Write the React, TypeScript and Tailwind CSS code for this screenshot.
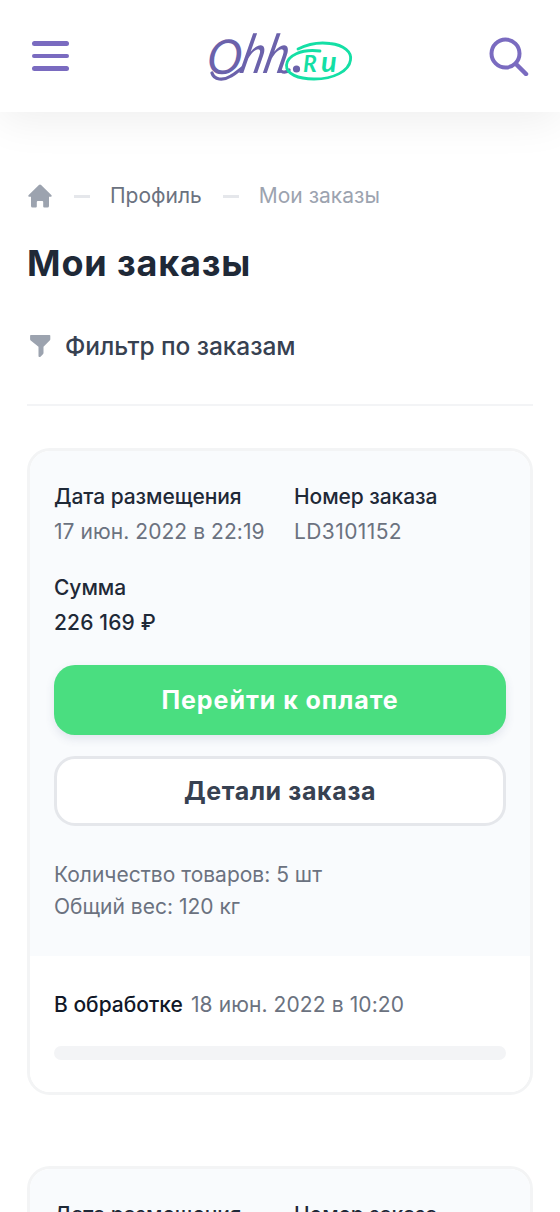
import { Fragment } from "react";

interface Order {
  id: string;
  date: string;
  total: string;
  count: number;
  weight: string;
  status: string;
  statusDate: string;
}

const orders: Order[] = [
  {
    id: "LD3101152",
    date: "17 июн. 2022 в 22:19",
    total: "226 169 ₽",
    count: 5,
    weight: "120 кг",
    status: "В обработке",
    statusDate: "18 июн. 2022 в 10:20",
  },
  {
    id: "LD3101151",
    date: "17 июн. 2022 в 21:40",
    total: "98 400 ₽",
    count: 2,
    weight: "64 кг",
    status: "В обработке",
    statusDate: "18 июн. 2022 в 10:05",
  },
];

const crumbs = [
  { title: "Профиль", className: "text-[#6b7280]" },
  { title: "Мои заказы", className: "text-[#9ca3af]" },
];

function Logo() {
  return (
    <svg width="150" height="60" viewBox="0 0 150 60" fill="none" className="overflow-visible" aria-label="Ohh.ru">
      <g fill="#6b62ab" fontFamily="Lato, sans-serif" fontStyle="italic">
        <text transform="translate(1 48) skewX(-5)" fontSize="48" textLength="35" lengthAdjust="spacingAndGlyphs">O</text>
        <text transform="translate(33 47) skewX(-14)" fontSize="54" textLength="47" lengthAdjust="spacingAndGlyphs">hh</text>
      </g>
      {/* swash under the first letter and the exit stroke before the dot */}
      <path
        d="M7 47C9 54 18 55 26 50C30 48 33 45 37 42M76 45C79 47 82 46 84 44"
        stroke="#6b62ab"
        strokeWidth="3.2"
        strokeLinecap="round"
      />
      <circle cx="91.5" cy="43" r="3.6" fill="#6b62ab" />
      <text
        x="98"
        y="45.5"
        fontSize="23"
        fill="#14dfa5"
        fontFamily="Lato, sans-serif"
        fontStyle="italic"
        fontWeight="700"
      >
        R
        <tspan x="116" fontSize="29">u</tspan>
      </text>
      <path
        d="M93 23C103 18 114 16 125 17.5C139 19 147 26 145.5 34C144 45 129 53 109 53C93 53 81 48 81.5 39C82 30 96 22.5 115 25"
        stroke="#14dfa5"
        strokeWidth="2.8"
        strokeLinecap="round"
      />
    </svg>
  );
}

function Header() {
  return (
    <header className="flex h-28 items-center justify-between bg-white px-[27px] shadow-[0_8px_44px_rgba(0,0,0,0.07)]">
      <button aria-label="Меню" className="flex w-[48px] flex-col gap-2 pl-[5px]">
        <span className="h-[4.5px] w-[37px] rounded-full bg-[#7a6bc0]" />
        <span className="h-[4.5px] w-[37px] rounded-full bg-[#7a6bc0]" />
        <span className="h-[4.5px] w-[37px] rounded-full bg-[#7a6bc0]" />
      </button>
      <Logo />
      <button aria-label="Поиск" className="flex w-[48px] justify-end pr-1">
        <svg width="40" height="40" viewBox="0 0 40 40" fill="none" stroke="#7a6bc0" strokeLinecap="round">
          <circle cx="16.5" cy="17.5" r="14" strokeWidth="4" />
          <path d="M27 28L37 38" strokeWidth="4.5" />
        </svg>
      </button>
    </header>
  );
}

function OrderCard({ order }: { order: Order }) {
  return (
    <article className="overflow-hidden rounded-[23px] border-3 border-[#f3f4f5]">
      <div className="h-[505px] bg-[#f9fbfd] px-6 pt-[28px] text-[21px]">
        <div className="grid grid-cols-[240px_1fr] gap-y-[21px] leading-[35px]">
          <div>
            <p className="font-medium tracking-[-0.07px] text-[#1f2937]">Дата размещения</p>
            <p className="tracking-[0.06px] text-[#6b7280]">{order.date}</p>
          </div>
          <div>
            <p className="font-medium tracking-[-0.07px] text-[#1f2937]">Номер заказа</p>
            <p className="tracking-[0.4px] text-[#6b7280]">{order.id}</p>
          </div>
          <div>
            <p className="font-medium tracking-[-0.07px] text-[#1f2937]">Сумма</p>
            <p className="font-medium tracking-[0.15px] text-[#1f2937]">{order.total}</p>
          </div>
        </div>
        <button className="mt-[25px] block h-[70px] w-full rounded-[21px] bg-[#4ade80] pt-0.5 text-[25px] font-bold tracking-[0.95px] text-white shadow-[0_4px_10px_rgba(60,70,120,0.12)]">
          Перейти к оплате
        </button>
        <button className="mt-[21px] block h-[70px] w-full rounded-[21px] border-3 border-[#e5e7eb] bg-white pt-0.5 text-[25px] font-bold tracking-[0.62px] text-[#374151]">
          Детали заказа
        </button>
        <div className="mt-[33px] leading-[31.5px] text-[#6b7280]">
          <p>Количество товаров: {order.count} шт</p>
          <p>Общий вес: {order.weight}</p>
        </div>
      </div>
      <div className="h-[136px] bg-white px-6 pt-[33px] text-[21px]">
        <p className="leading-8 tracking-[0.1px] text-[#6b7280]">
          <span className="mr-2 font-medium tracking-normal text-[#111827]">{order.status}</span>
          {order.statusDate}
        </p>
        <div className="mt-[25px] h-3.5 rounded-full bg-[#f3f4f6]" />
      </div>
    </article>
  );
}

export default function App() {
  return (
    <div className="h-[1212px] overflow-hidden bg-white font-[Inter,'Noto_Sans',sans-serif]">
      <Header />
      <main className="px-[27px] pt-[68px]">
        <nav className="flex h-8 items-center text-[21px]">
          <svg width="26" height="26" viewBox="0 0 26 26" fill="#9ca3af">
            <path d="M11.9 2.1a1.6 1.6 0 0 1 2.2 0L24.3 12c.8.8.3 1.8-.8 1.8H22V23a1.6 1.6 0 0 1-1.6 1.6h-3.2a1 1 0 0 1-1-1V19a1 1 0 0 0-1-1h-4.4a1 1 0 0 0-1 1v4.6a1 1 0 0 1-1 1H5.6A1.6 1.6 0 0 1 4 23v-9.2H2.5c-1.1 0-1.6-1-.8-1.8z" />
          </svg>
          {crumbs.map((crumb) => (
            <Fragment key={crumb.title}>
              <span className="mr-5 ml-[21px] h-[3px] w-4 bg-[#e5e7eb]" />
              <a className={crumb.className}>{crumb.title}</a>
            </Fragment>
          ))}
        </nav>
        <h1 className="mt-[28px] text-[36px] leading-[46px] font-bold tracking-[0.85px] text-[#1f2937]">Мои заказы</h1>
        <button className="mt-[42px] flex h-9 items-center text-[24.5px] font-medium tracking-[-0.08px] text-[#374151]">
          <svg className="mr-3" width="26" height="26" viewBox="0 0 26 26" fill="#9ca3af">
            <path d="M3.8 2h18.7a.8.8 0 0 1 .8.8v3.5a2 2 0 0 1-.6 1.3L16.5 13.8v6.2c0 .6-.3 1.200-.8 1.600l-2.500 2.300c-.7.500-1.700.1-1.700-.8v-9.300L3.700 7.600a2 2 0 0 1-.6-1.300V2.800c0-.4.300-.8.700-.8z" />
          </svg>
          Фильтр по заказам
        </button>
        <hr className="mt-[40px] mb-[42px] border-t-2 border-[#f3f4f6]" />
        <div className="flex flex-col gap-[71px]">
          {orders.map((order) => (
            <OrderCard key={order.id} order={order} />
          ))}
        </div>
      </main>
    </div>
  );
}
